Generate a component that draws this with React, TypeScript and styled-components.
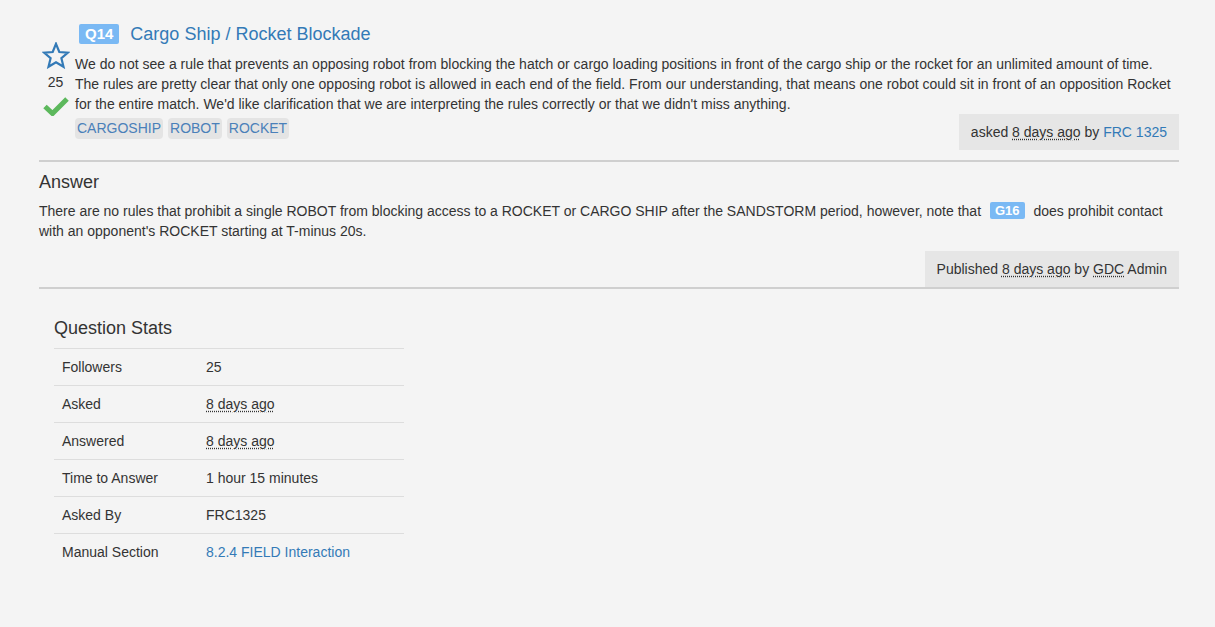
import React from "react";
import styled, { createGlobalStyle } from "styled-components";

const GlobalStyle = createGlobalStyle`
  html, body { margin: 0; padding: 0; background: #f4f4f4; }
  body {
    font-family: "Liberation Sans", Arial, Helvetica, sans-serif;
    font-size: 14px;
    line-height: 20px;
    color: #333;
  }
`;

const Page = styled.div`
  padding: 20px 36px 40px 39px;
  width: 1140px;
`;

const QuestionRow = styled.div`
  display: flex;
`;

const VoteCol = styled.div`
  width: 36px;
  flex: none;
  display: flex;
  flex-direction: column;
  align-items: center;
  padding-top: 22px;
  padding-right: 3px;
  box-sizing: border-box;
`;

const VoteCount = styled.div`
  font-size: 14px;
  line-height: 16px;
  margin-top: 5px;
  margin-bottom: 6px;
`;

const MainCol = styled.div`
  flex: 1;
  min-width: 0;
`;

const TitleLine = styled.h3`
  margin: 0 0 6px 4px;
  font-size: 18px;
  line-height: 28px;
  font-weight: normal;
  color: #337ab7;
  display: flex;
  align-items: center;
`;

const Label = styled.span`
  display: inline-block;
  background: #7ab9f4;
  color: #fff;
  font-weight: bold;
  font-size: 15px;
  line-height: 15px;
  padding: 2px 6px 3px;
  border-radius: 2px;
  margin-right: 11px;
`;

const InlineLabel = styled.span`
  display: inline-block;
  background: #7ab9f4;
  color: #fff;
  font-weight: bold;
  font-size: 13px;
  line-height: 13px;
  padding: 2px 5px 2px;
  border-radius: 2px;
  margin: 0 5px 0 5px;
  vertical-align: 1px;
`;

const Body = styled.p`
  margin: 0;
`;

const TagRow = styled.div`
  display: flex;
  justify-content: space-between;
  align-items: flex-start;
`;

const Tags = styled.div`
  display: flex;
  gap: 5px;
  padding-top: 4px;
`;

const Tag = styled.a`
  background: #e4e4e4;
  color: #4a80b9;
  padding: 0 2px;
  line-height: 21px;
  border-radius: 4px;
  text-decoration: none;
`;

const MetaBox = styled.div`
  background: #e6e6e6;
  padding: 8px 12px;
  line-height: 20px;
`;

const Link = styled.a`
  color: #337ab7;
  text-decoration: none;
`;

const Abbr = styled.abbr`
  text-decoration: underline dotted;
  text-underline-offset: 2px;
  cursor: help;
`;

const Rule = styled.hr<{ $top?: number }>`
  margin: ${(p) => p.$top ?? 10}px 0 0;
  border: 0;
  border-top: 2px solid #cfcfcf;
  height: 0;
`;

const SectionTitle = styled.h4`
  margin: 9px 0 8px;
  font-size: 18px;
  line-height: 22px;
  font-weight: normal;
  color: #333;
`;

const RightRow = styled.div`
  display: flex;
  justify-content: flex-end;
  margin-top: 10px;
`;

const StatsPanel = styled.div`
  padding: 28px 15px 15px;
  width: 350px;
`;

const StatsTitle = styled.h4`
  margin: 0 0 9px;
  font-size: 18px;
  line-height: 22px;
  font-weight: normal;
`;

const Table = styled.table`
  border-collapse: collapse;
  width: 350px;
`;

const Cell = styled.td<{ $first?: boolean }>`
  padding: 8px;
  line-height: 20px;
  border-top: 1px solid #dddddd;
  width: ${(p) => (p.$first ? "128px" : "auto")};
  text-align: left;
  vertical-align: top;
`;

const StarIcon = () => (
  <svg width="28" height="27" viewBox="0 0 28 27">
    <path
      d="M14 1.8 L17.3 10 L26 10.6 L19.4 16.2 L21.5 24.8 L14 20.2 L6.5 24.8 L8.6 16.2 L2 10.6 L10.7 10 Z"
      fill="none"
      stroke="#337ab7"
      strokeWidth="2.2"
      strokeLinejoin="miter"
    />
  </svg>
);

const CheckIcon = () => (
  <svg width="26" height="20" viewBox="0 0 26 20">
    <path
      d="M2 10.5 L9.5 17.5 L24 3"
      fill="none"
      stroke="#5cb85c"
      strokeWidth="5"
      strokeLinecap="butt"
    />
  </svg>
);

const stats: { k: string; v: React.ReactNode }[] = [
  { k: "Followers", v: "25" },
  { k: "Asked", v: <Abbr title="">8 days ago</Abbr> },
  { k: "Answered", v: <Abbr title="">8 days ago</Abbr> },
  { k: "Time to Answer", v: "1 hour 15 minutes" },
  { k: "Asked By", v: "FRC1325" },
  { k: "Manual Section", v: <Link href="#">8.2.4 FIELD Interaction</Link> },
];

export default function App() {
  return (
    <>
      <GlobalStyle />
      <Page>
        <QuestionRow>
          <VoteCol>
            <StarIcon />
            <VoteCount>25</VoteCount>
            <CheckIcon />
          </VoteCol>
          <MainCol>
            <TitleLine>
              <Label>Q14</Label>
              Cargo Ship / Rocket Blockade
            </TitleLine>
            <Body>
              We do not see a rule that prevents an opposing robot from blocking the hatch or cargo
              loading positions in front of the cargo ship or the rocket for an unlimited amount of
              time. The rules are pretty clear that only one opposing robot is allowed in each end of
              the field. From our understanding, that means one robot could sit in front of an
              opposition Rocket for the entire match. We'd like clarification that we are
              interpreting the rules correctly or that we didn't miss anything.
            </Body>
            <TagRow>
              <Tags>
                <Tag href="#">CARGOSHIP</Tag>
                <Tag href="#">ROBOT</Tag>
                <Tag href="#">ROCKET</Tag>
              </Tags>
              <MetaBox>
                asked <Abbr title="">8 days ago</Abbr> by <Link href="#">FRC 1325</Link>
              </MetaBox>
            </TagRow>
          </MainCol>
        </QuestionRow>
        <Rule $top={10} />
        <SectionTitle>Answer</SectionTitle>
        <Body>
          There are no rules that prohibit a single ROBOT from blocking access to a ROCKET or CARGO
          SHIP after the SANDSTORM period, however, note that <InlineLabel>G16</InlineLabel> does
          prohibit contact with an opponent's ROCKET starting at T-minus 20s.
        </Body>
        <RightRow>
          <MetaBox>
            Published <Abbr title="">8 days ago</Abbr> by <Abbr title="">GDC</Abbr> Admin
          </MetaBox>
        </RightRow>
        <Rule $top={0} />
        <StatsPanel>
          <StatsTitle>Question Stats</StatsTitle>
          <Table>
            <tbody>
              {stats.map((s) => (
                <tr key={s.k}>
                  <Cell $first>{s.k}</Cell>
                  <Cell>{s.v}</Cell>
                </tr>
              ))}
            </tbody>
          </Table>
        </StatsPanel>
      </Page>
    </>
  );
}
